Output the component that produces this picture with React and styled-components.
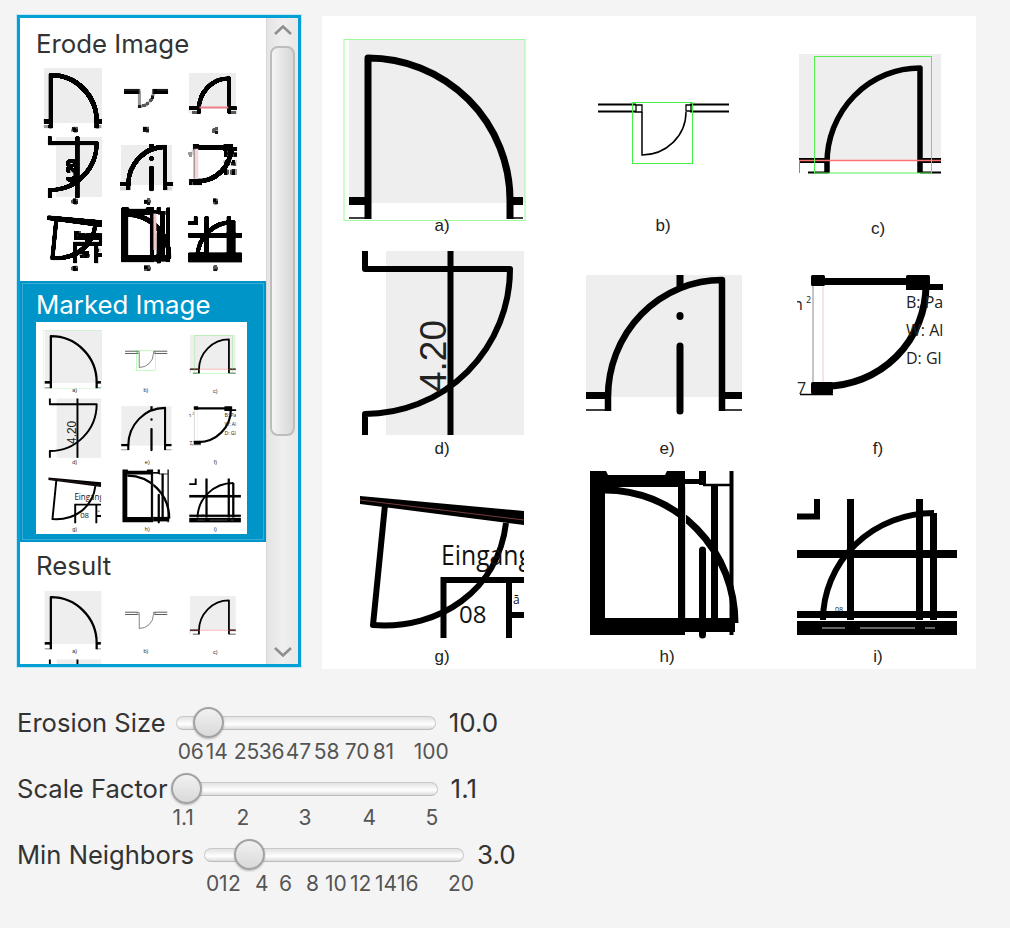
import React from 'react';
import styled, { createGlobalStyle } from 'styled-components';

const GlobalStyle = createGlobalStyle`
  html, body {
    margin: 0;
    padding: 0;
    background: #f4f4f4;
  }
  body {
    font-family: Inter, "Open Sans", "Liberation Sans", sans-serif;
    color: #333;
  }
`;

// layout
const Page = styled.div`
  width: 1010px;
  height: 928px;
  padding: 15px 0 0 17px;
  box-sizing: border-box;
  overflow: hidden;
`;

const TopRow = styled.div`
  display: flex;
  align-items: flex-start;
  gap: 21px;
`;

const ListView = styled.div`
  display: flex;
  flex: none;
  width: 284px;
  height: 652px;
  box-sizing: border-box;
  border: 3px solid #03a0d6;
  box-shadow: 0 0 0 1px #c5e6f2;
  background: #fff;
  overflow: hidden;
`;

const Cells = styled.div`
  flex: 1;
  padding-top: 2px;
  overflow: hidden;
`;

const Cell = styled.div`
  height: 261px;
  box-sizing: border-box;
  padding: 6px 0 0 16px;
  background: ${(p) => (p.$selected ? '#0095c8' : '#fff')};
  box-shadow: ${(p) => (p.$selected ? 'inset 0 0 0 2px #0095c8, inset 0 0 0 3px #38acd6' : 'none')};
`;

const CellLabel = styled.div`
  height: 35px;
  line-height: 35px;
  font-size: 25.8px;
  color: ${(p) => (p.$selected ? '#fff' : '#333')};
`;

const ScrollBar = styled.div`
  flex: none;
  width: 32px;
  display: flex;
  flex-direction: column;
  align-items: center;
  box-sizing: border-box;
  border-left: 1px solid #d6d6d6;
  background: linear-gradient(to right, #e4e4e4, #efefef 50%, #e8e8e8);
`;

const ScrollArrow = styled.svg`
  flex: none;
  width: 18px;
  height: 10px;
  margin: ${(p) => p.$margin};
`;

const ScrollThumb = styled.div`
  flex: none;
  width: 25px;
  height: 390px;
  box-sizing: border-box;
  border: 2px solid #bdbdbd;
  border-radius: 8px;
  background: linear-gradient(to right, #f6f6f6, #e6e6e6 45%, #d8d8d8);
`;

const ScrollSpacer = styled.div`
  flex: 1;
`;

const Panel = styled.div`
  flex: none;
  width: 654px;
  height: 653px;
  margin-top: 1px;
  background: #fff;
`;

const SheetSvg = styled.svg`
  display: block;
  width: ${(p) => p.$width}px;
  height: ${(p) => p.$height}px;
  background: #fff;
`;

// sliders
const Controls = styled.div`
  display: flex;
  flex-direction: column;
  margin-top: 47px;
`;

const SliderRow = styled.div`
  display: flex;
  align-items: flex-start;
  gap: 10px;
  height: 66px;
`;

const SliderLabel = styled.div`
  height: 14px;
  line-height: 14px;
  font-size: 25.6px;
  color: #333;
  white-space: nowrap;
`;

const SliderColumn = styled.div`
  flex: none;
  width: 260px;
`;

const Track = styled.div`
  position: relative;
  height: 14px;
  box-sizing: border-box;
  border: 1px solid #c9c9c9;
  border-bottom-color: #bcbcbc;
  border-radius: 7px;
  background: linear-gradient(to bottom, #e2e2e2, #f8f8f8 45%, #ffffff 60%, #dcdcdc);
`;

const Thumb = styled.div`
  position: absolute;
  top: -10px;
  width: 31px;
  height: 31px;
  margin-left: -15.5px;
  box-sizing: border-box;
  border: 2px solid #a2a2a2;
  border-radius: 50%;
  background: linear-gradient(to bottom, #f1f1f1, #e3e3e3 60%, #d9d9d9);
  box-shadow: 0 1px 2px rgba(0, 0, 0, 0.25);
`;

const TickRow = styled.div`
  display: flex;
  margin-top: 10px;
  margin-left: ${(p) => p.$inset}px;
  height: 24px;
`;

const Tick = styled.span`
  flex: none;
  width: ${(p) => p.$span}px;
  font-size: 21px;
  line-height: 24px;
  color: #555;
  white-space: nowrap;
`;

const SliderValue = styled.div`
  height: 14px;
  line-height: 14px;
  margin-left: 3px;
  font-size: 26px;
  color: #333;
`;

const ink = '#000';
const labelFont = '"Liberation Sans", sans-serif';
const signFont = '"Open Sans", sans-serif';
const erodeRamp = '0 0 0 0 0 0 0 0 0.1 0.35 0.6 0.85 0.93 0.95 0.933 1';

const captions = [
  ['a)', 442, 231],
  ['b)', 663, 231],
  ['c)', 878, 234],
  ['d)', 442, 454],
  ['e)', 667, 454],
  ['f)', 878, 454],
  ['g)', 442, 662],
  ['h)', 667, 662],
  ['i)', 878, 662],
];

// the nine door plans, in the coordinates of the big panel (origin 322,16)
const DoorSheet = ({ id, width, height, green, erode }) => (
  <SheetSvg $width={width} $height={height} viewBox="322 16 654 653">
    <defs>
      <filter
        id={`${id}-erode`}
        filterUnits="userSpaceOnUse"
        x="322"
        y="16"
        width="654"
        height="653"
        colorInterpolationFilters="sRGB"
      >
        <feMorphology operator="erode" radius="4" />
        {/* darker black once the thin lines are shrunk to grey */}
        <feComponentTransfer>
          <feFuncR type="discrete" tableValues={erodeRamp} />
          <feFuncG type="discrete" tableValues={erodeRamp} />
          <feFuncB type="discrete" tableValues={erodeRamp} />
        </feComponentTransfer>
      </filter>
      <clipPath id={`${id}-f`}>
        <rect x="797" y="270" width="146" height="130" />
      </clipPath>
      <clipPath id={`${id}-g`}>
        <rect x="360" y="490" width="164" height="150" />
      </clipPath>
    </defs>
    <g filter={erode ? `url(#${id}-erode)` : undefined}>
      <rect x="322" y="16" width="654" height="653" fill="#fff" />

      {/* a */}
      <rect x="349" y="39" width="176" height="164" fill="#eee" />
      <path d="M368 219V58A142 142 0 0 1 510 200V219" fill="none" stroke={ink} strokeWidth="7" strokeLinejoin="round" />
      <rect x="349" y="197" width="20" height="8" fill={ink} />
      <rect x="508" y="197" width="15" height="8" fill={ink} />
      <path d="M349 218H368M510 218H523" stroke={ink} strokeWidth="1.5" />

      {/* b */}
      <path d="M598 104.5H636M598 111.5H636M690 104.5H729M690 111.5H729" stroke={ink} strokeWidth="2" />
      <path d="M642 112V155A44 43 0 0 0 686 112" fill="none" stroke={ink} strokeWidth="1.5" />
      <path d="M636 105H642V112H636ZM686 105H691V111H686Z" fill="#fff" stroke={ink} strokeWidth="1.3" />

      {/* c */}
      <rect x="799" y="54" width="142" height="106" fill="#eee" />
      <path d="M827 173V163A93 95 0 0 1 920 68V173" fill="none" stroke={ink} strokeWidth="5.5" strokeLinejoin="round" />
      <rect x="799" y="158" width="30" height="5" fill={ink} />
      <rect x="918" y="158" width="23" height="5" fill={ink} />
      <path d="M808 172.5H829M920 172.5H941" stroke={ink} strokeWidth="2" />
      <path d="M799.5 160V173" stroke="#888" strokeWidth="1" />
      {!erode && <path d="M799 160.5H941" stroke="#ff7272" strokeWidth="1.5" />}

      {/* d */}
      <rect x="386" y="251" width="138" height="184" fill="#eee" />
      <path d="M365 251V269H510A145 145 0 0 1 365 414V435" fill="none" stroke={ink} strokeWidth="6" strokeLinejoin="round" />
      <text
        x="446"
        y="392"
        transform="rotate(-90 446 392)"
        fontFamily={labelFont}
        fontSize="37"
        fill="#222"
      >
        4.20
      </text>
      <path d="M450.5 251V435" stroke={ink} strokeWidth="6" />

      {/* e */}
      <rect x="586" y="275" width="156" height="122" fill="#eee" />
      <path d="M608 411V397A114 117 0 0 1 722 280V411" fill="none" stroke={ink} strokeWidth="6.5" strokeLinejoin="round" />
      <path d="M680 275V288" stroke={ink} strokeWidth="7" />
      <path d="M680 346V411" stroke={ink} strokeWidth="7" strokeLinecap="round" />
      <ellipse cx="680" cy="316" rx="3.6" ry="4" fill={ink} />
      <rect x="586" y="392" width="25" height="7" fill={ink} />
      <rect x="719" y="392" width="23" height="7" fill={ink} />
      <path d="M586 410H611M719 410H742" stroke={ink} strokeWidth="1.3" />

      {/* f */}
      <g clipPath={`url(#${id}-f)`}>
        {!erode && <path d="M813 286V382" stroke="#b5b0b0" strokeWidth="1.5" />}
        {!erode && <path d="M823 286V382" stroke="#f6c8c8" strokeWidth="1" />}
        <path d="M815 281.5H925" stroke={ink} strokeWidth="7" />
        <path d="M906 287H943" stroke={ink} strokeWidth="6" />
        <rect x="811" y="275" width="14" height="11" rx="1.5" fill={ink} />
        <rect x="906" y="275" width="24" height="12" rx="1.5" fill={ink} />
        <path d="M926 285A101 101 0 0 1 825 386" fill="none" stroke={ink} strokeWidth="7" />
        <rect x="811" y="382" width="22" height="12" rx="1.5" fill={ink} />
        <path d="M800 394.5H833" stroke={ink} strokeWidth="1.3" />
        <g fontFamily={signFont} fontSize="16" fill="#222">
          <text x="906" y="308">B: Pa</text>
          <text x="906" y="336">W: Al</text>
          <text x="906" y="364">D: Gl</text>
          <text x="793" y="310">n</text>
          <text x="806" y="303" fontSize="9">2</text>
          <text x="797" y="394">7</text>
        </g>
      </g>

      {/* g */}
      <g clipPath={`url(#${id}-g)`}>
        <path d="M360 496L524 511V525L360 504Z" fill={ink} />
        <path d="M413 496H417L415 501Z" fill="#fff" />
        {!erode && <path d="M360 500L524 520" stroke="#a55" strokeWidth="0.7" />}
        <path d="M385 505L373 625C440 630 498 590 506 523" fill="none" stroke={ink} strokeWidth="6" strokeLinejoin="round" />
        <text x="441" y="565" fontFamily={signFont} fontSize="27" fill="#111" textLength="91" lengthAdjust="spacingAndGlyphs">Eingang</text>
        <path d="M443.5 638V580H524M509 580V638M509 615H524" fill="none" stroke={ink} strokeWidth="6" />
        <text x="459" y="623" fontFamily={signFont} fontSize="24" fill="#111">08</text>
        <text x="513" y="604" fontFamily={signFont} fontSize="12" fill="#111">ā</text>
      </g>

      {/* h */}
      <path d="M590 471H606L608 475H665L667 471H685V635H590ZM605 487V618H678V487Z" fill={ink} fillRule="evenodd" />
      <path d="M685 481.5H703" stroke={ink} strokeWidth="5" />
      <path d="M703 485H730" stroke={ink} strokeWidth="2.5" />
      <rect x="685" y="618" width="50" height="14" fill={ink} />
      <path d="M702.5 471V485M714.5 484V630" stroke={ink} strokeWidth="7" />
      <path d="M702.5 550V635" stroke={ink} strokeWidth="7" strokeLinecap="round" />
      <path d="M731.5 471V635" stroke={ink} strokeWidth="4" />
      <path d="M605 490A130 133 0 0 1 735 623" fill="none" stroke={ink} strokeWidth="7" />
      {!erode && <path d="M685.5 487V618" stroke="#f0c8c8" strokeWidth="1" />}

      {/* i */}
      <path d="M797 516.5H817V499" fill="none" stroke={ink} strokeWidth="6" />
      <path d="M850.5 499V620M919.5 499V620M933.5 513V620" stroke={ink} strokeWidth="7" />
      <path d="M823 620A111 107 0 0 1 934 513" fill="none" stroke={ink} strokeWidth="6" strokeLinejoin="round" />
      <text x="835" y="612" fontFamily={signFont} fontSize="7" fill="#111">08</text>
      <rect x="797" y="550" width="160" height="8" fill={ink} />
      <rect x="797" y="611" width="160" height="7" fill={ink} />
      <rect x="797" y="621" width="160" height="14" fill={ink} />
      <path d="M822 628H845M860 628H915M925 628H935" stroke="#ccc" strokeWidth="1" />

      {green && (
        <g fill="none">
          <rect x="344" y="39.5" width="181" height="181" stroke="#9cfb9c" />
          <rect x="632.5" y="102.5" width="60" height="61" stroke="#45ef45" />
          <rect x="814.5" y="56.5" width="117" height="116.5" stroke="#55ef55" />
        </g>
      )}

      <g fontFamily={labelFont} fontSize="17" fill="#222" textAnchor="middle">
        {captions.map(([text, x, y]) => (
          <text key={text} x={x} y={y}>{text}</text>
        ))}
      </g>
    </g>

    {/* pink lines keep their colour in the eroded picture */}
    {erode && (
      <g>
        <rect x="829" y="155" width="89" height="6" fill="#ee7f8a" />
        <rect x="810" y="286" width="5" height="92" fill="#a89a9a" />
        <rect x="815" y="286" width="10" height="92" fill="#f9d4d4" />
        <rect x="686" y="487" width="9" height="113" fill="#f5c4c4" />
      </g>
    )}
  </SheetSvg>
);

const cells = [
  { id: 'erode', label: 'Erode Image', erode: true },
  { id: 'marked', label: 'Marked Image', green: true, selected: true },
  { id: 'result', label: 'Result' },
];

const sliders = [
  {
    label: 'Erosion Size',
    value: 10,
    text: '10.0',
    min: 0,
    max: 100,
    inset: 2,
    ticks: [['0', 13], ['6', 15], ['14', 28], ['25', 25], ['36', 27], ['47', 28], ['58', 31], ['70', 28], ['81', 41], ['100', 40]],
  },
  {
    label: 'Scale Factor',
    value: 1.1,
    text: '1.1',
    min: 1.1,
    max: 5,
    inset: -5,
    ticks: [['1.1', 64], ['2', 62], ['3', 64], ['4', 63], ['5', 20]],
  },
  {
    label: 'Min Neighbors',
    value: 3,
    text: '3.0',
    min: 0,
    max: 20,
    inset: 2,
    ticks: [['0', 13], ['1', 9], ['2', 27], ['4', 24], ['6', 27], ['8', 19], ['10', 25], ['12', 25], ['14', 22], ['16', 51], ['20', 30]],
  },
];

const Slider = ({ label, value, text, min, max, inset, ticks }) => {
  const left = 7.5 + ((value - min) / (max - min)) * 245;
  return (
    <SliderRow>
      <SliderLabel>{label}</SliderLabel>
      <SliderColumn>
        <Track>
          <Thumb style={{ left }} />
        </Track>
        <TickRow $inset={inset}>
          {ticks.map(([tick, span]) => (
            <Tick key={tick} $span={span}>{tick}</Tick>
          ))}
        </TickRow>
      </SliderColumn>
      <SliderValue>{text}</SliderValue>
    </SliderRow>
  );
};

export default function App() {
  return (
    <Page>
      <GlobalStyle />
      <TopRow>
        <ListView>
          <Cells>
            {cells.map((cell) => (
              <Cell key={cell.id} $selected={cell.selected}>
                <CellLabel $selected={cell.selected}>{cell.label}</CellLabel>
                <DoorSheet id={cell.id} width={211} height={212} green={cell.green} erode={cell.erode} />
              </Cell>
            ))}
          </Cells>
          <ScrollBar>
            <ScrollArrow $margin="7px 0 11px" viewBox="0 0 18 10">
              <path d="M1 9L9 1.5L17 9" fill="none" stroke="#8f8f8f" strokeWidth="2.6" />
            </ScrollArrow>
            <ScrollThumb />
            <ScrollSpacer />
            <ScrollArrow $margin="0 0 7px" viewBox="0 0 18 10">
              <path d="M1 1L9 8.5L17 1" fill="none" stroke="#8f8f8f" strokeWidth="2.6" />
            </ScrollArrow>
          </ScrollBar>
        </ListView>
        <Panel>
          <DoorSheet id="main" width={654} height={653} green />
        </Panel>
      </TopRow>
      <Controls>
        {sliders.map((slider) => (
          <Slider key={slider.label} {...slider} />
        ))}
      </Controls>
    </Page>
  );
}
